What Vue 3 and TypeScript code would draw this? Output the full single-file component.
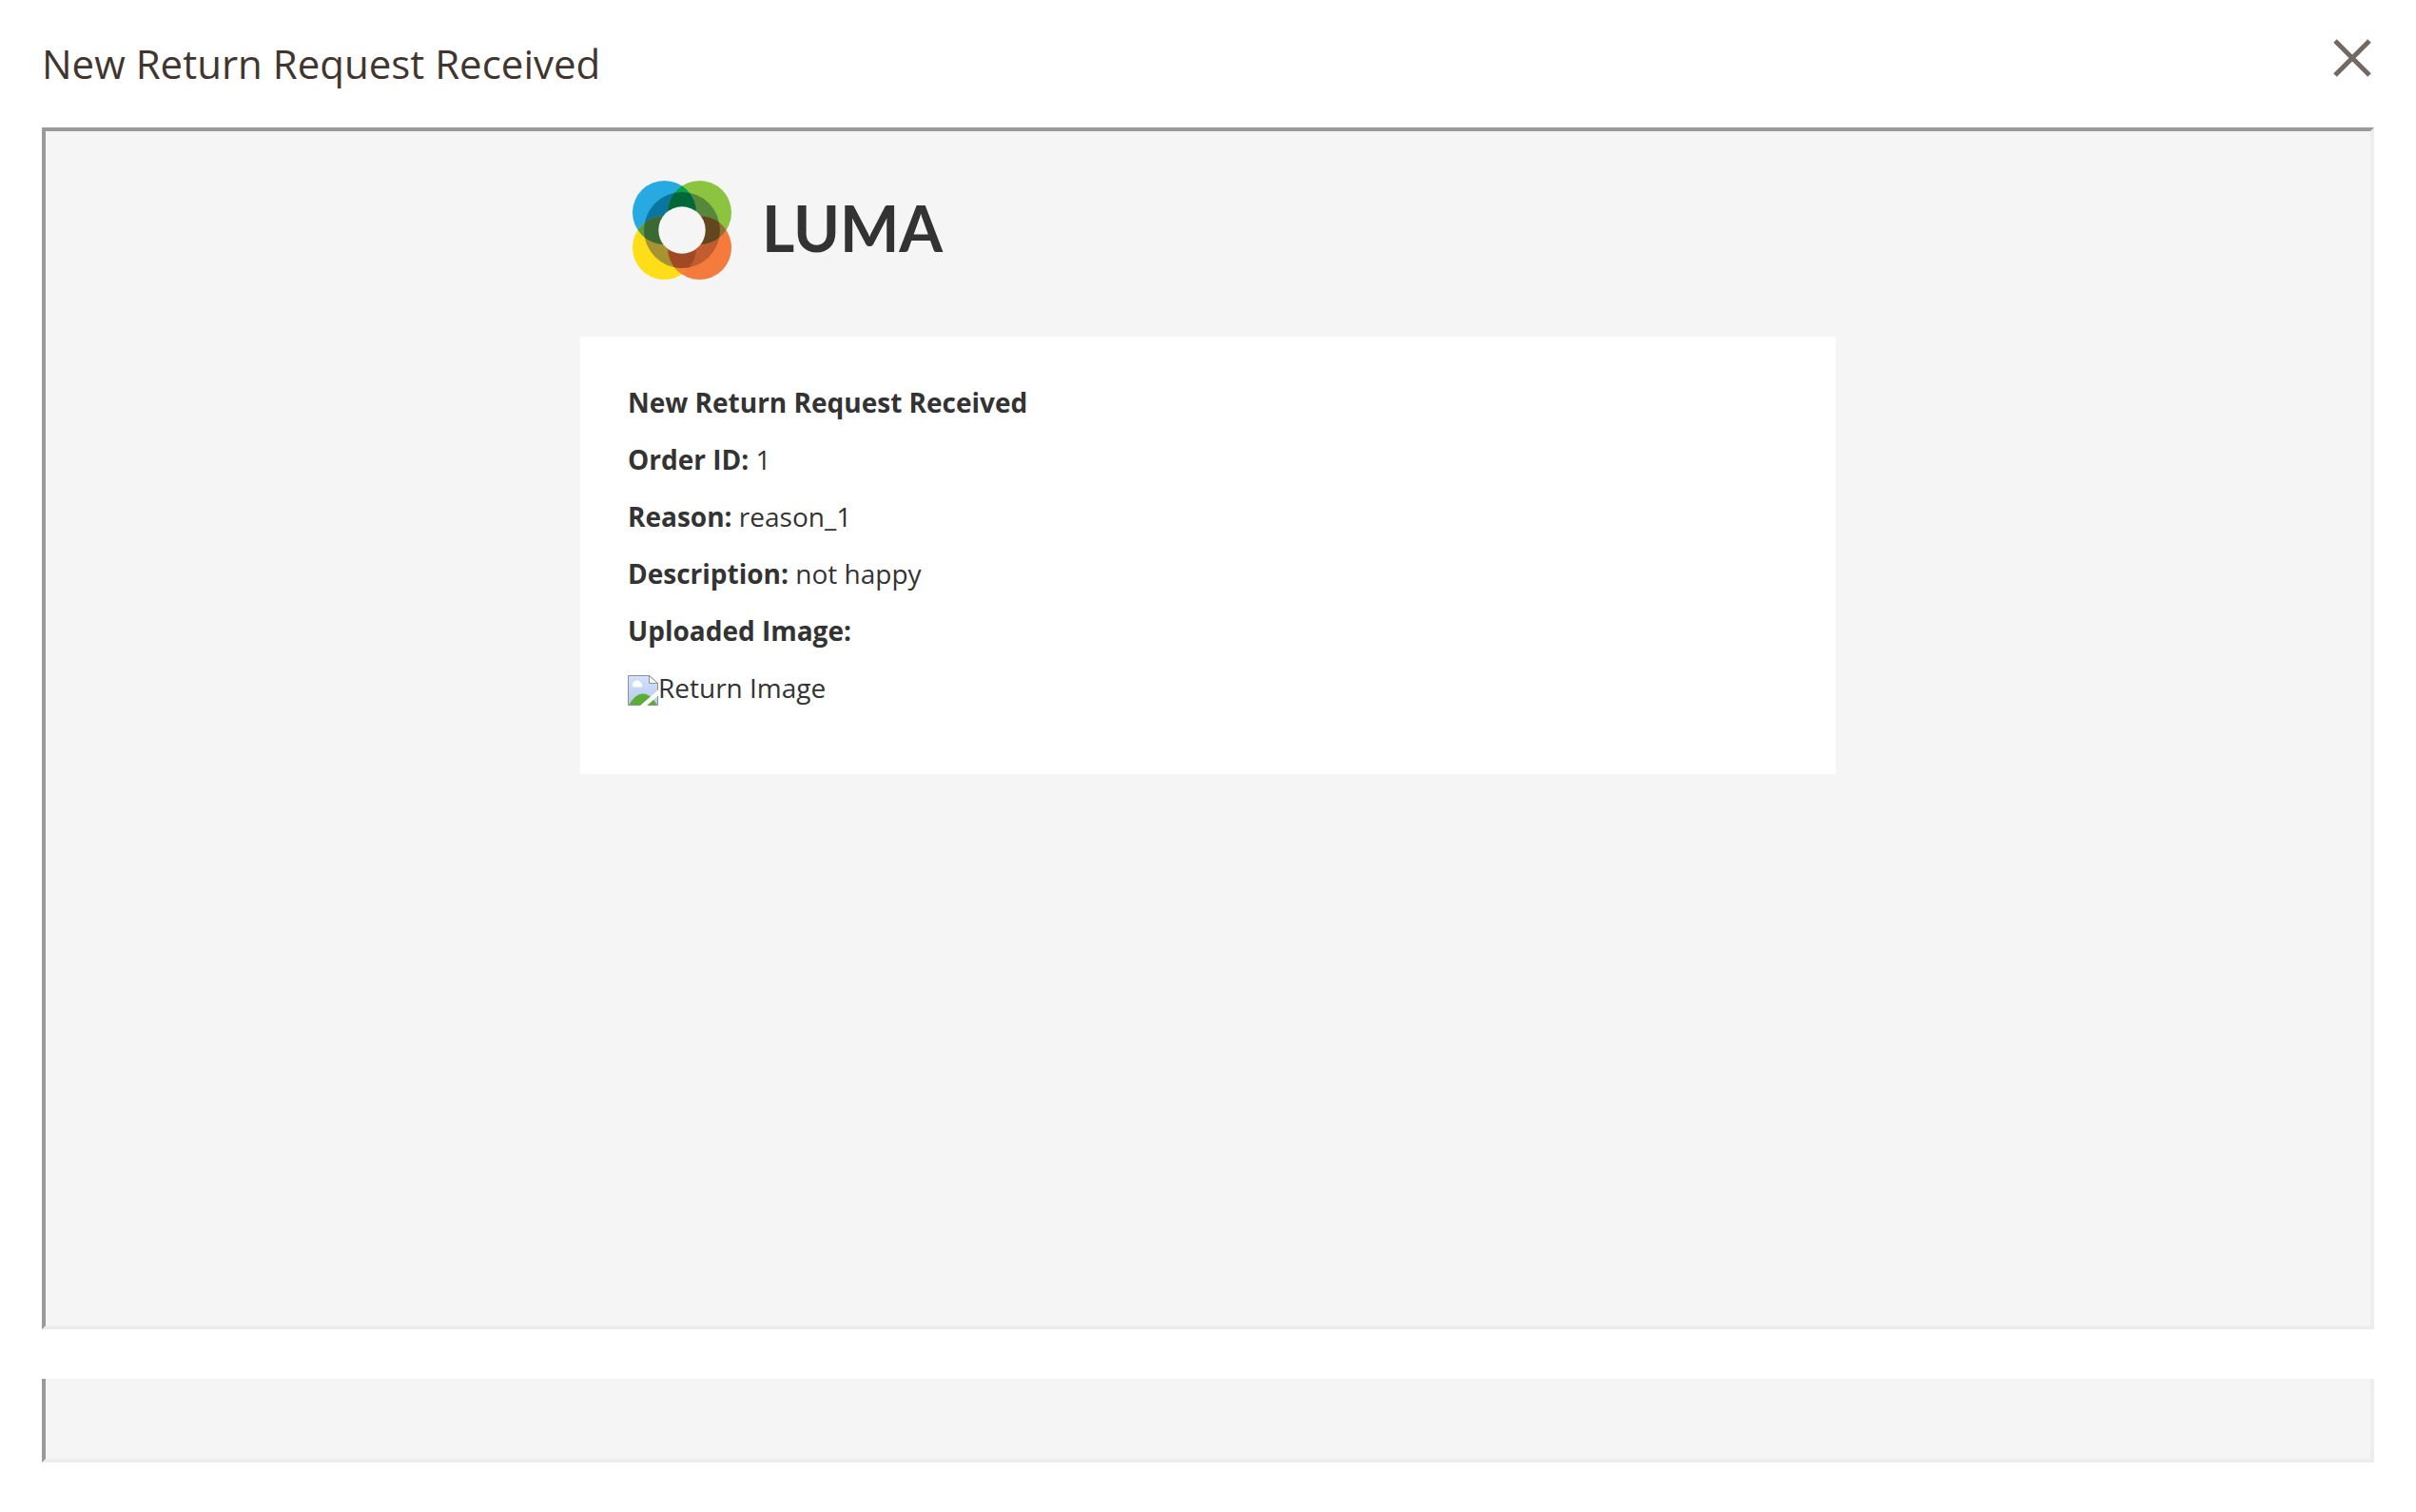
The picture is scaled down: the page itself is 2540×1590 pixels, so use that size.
<script setup lang="ts">
interface Detail {
  label: string
  value: string
}

const title: string = 'New Return Request Received'

const details: Detail[] = [
  { label: 'Order ID:', value: '1' },
  { label: 'Reason:', value: 'reason_1' },
  { label: 'Description:', value: 'not happy' },
  { label: 'Uploaded Image:', value: '' },
]
</script>

<template>
  <main class="modal">
    <header class="modal-header">
      <h1 class="modal-title">{{ title }}</h1>
      <button class="close" type="button" aria-label="Close">
        <svg width="40" height="40" viewBox="0 0 40 40" aria-hidden="true">
          <path d="M2 2 38 38M38 2 2 38" fill="none" stroke="#736963" stroke-width="5" />
        </svg>
      </button>
    </header>

    <section class="frame preview">
      <div class="email">
        <div class="brand">
          <svg class="mark" width="104" height="104" viewBox="0 0 104 104" aria-hidden="true">
            <defs>
              <clipPath id="clip-blue"><circle cx="33.5" cy="33.5" r="33.5" /></clipPath>
              <clipPath id="clip-orange"><circle cx="70.5" cy="70.5" r="33.5" /></clipPath>
              <clipPath id="clip-ring"><circle cx="52" cy="52" r="40" /></clipPath>
            </defs>
            <circle cx="33.5" cy="33.5" r="33.5" fill="#27a9e1" />
            <circle cx="70.5" cy="33.5" r="33.5" fill="#8bc53f" />
            <circle cx="33.5" cy="70.5" r="33.5" fill="#ffde17" />
            <circle cx="70.5" cy="70.5" r="33.5" fill="#f47b3c" />
            <g clip-path="url(#clip-blue)">
              <circle cx="70.5" cy="33.5" r="33.5" fill="#00a14b" />
              <circle cx="33.5" cy="70.5" r="33.5" fill="#5c9a45" />
            </g>
            <g clip-path="url(#clip-orange)">
              <circle cx="70.5" cy="33.5" r="33.5" fill="#966c39" />
              <circle cx="33.5" cy="70.5" r="33.5" fill="#f58233" />
            </g>
            <g clip-path="url(#clip-ring)">
              <circle cx="33.5" cy="33.5" r="33.5" fill="#0b769d" />
              <circle cx="70.5" cy="33.5" r="33.5" fill="#57863d" />
              <circle cx="33.5" cy="70.5" r="33.5" fill="#a79332" />
              <circle cx="70.5" cy="70.5" r="33.5" fill="#c05c2e" />
              <g clip-path="url(#clip-blue)">
                <circle cx="70.5" cy="33.5" r="33.5" fill="#006838" />
                <circle cx="33.5" cy="70.5" r="33.5" fill="#3a6932" />
              </g>
              <g clip-path="url(#clip-orange)">
                <circle cx="70.5" cy="33.5" r="33.5" fill="#62461f" />
                <circle cx="33.5" cy="70.5" r="33.5" fill="#9f4a24" />
              </g>
            </g>
            <circle cx="52" cy="52" r="24.7" fill="#f5f5f5" />
          </svg>
          <span class="wordmark">LUMA</span>
        </div>

        <article class="card">
          <p><strong>{{ title }}</strong></p>
          <p v-for="item in details" :key="item.label">
            <strong>{{ item.label }}</strong> {{ item.value }}
          </p>
          <p class="attachment">
            <svg width="32" height="32" viewBox="0 0 32 32" aria-hidden="true">
              <defs>
                <linearGradient id="sky" x1="0" y1="0" x2="0" y2="1">
                  <stop offset="0" stop-color="#d3e1fb" />
                  <stop offset="1" stop-color="#b6c9ee" />
                </linearGradient>
              </defs>
              <path d="M.5.5H22.5L31.5 8.5V31.5H.5Z" fill="url(#sky)" />
              <path d="M6 12.5a3 3 0 0 1 0-5 4.500 4.500 0 0 1 8 1 2.200 2.200 0 0 1 0 4Z" fill="#fff" />
              <path d="M1 31.500C5 25 10 19.500 16 19.500S27 25 31 31.500Z" fill="#5aae35" />
              <path d="M.5.5H22.5L31.5 8.5V31.5H.5Z" fill="none" stroke="#8d9096" />
              <path d="M22.5.5V8.5H31.5Z" fill="#fff" stroke="#8d9096" />
              <path d="M13 32 32 15.500V21.500L20 32Z" fill="#fff" />
            </svg>
            <span>Return Image</span>
          </p>
        </article>
      </div>
    </section>

    <section class="frame remainder"></section>
  </main>
</template>

<style>
body {
  margin: 0;
  background: #fff;
}
</style>

<style scoped>
.modal {
  box-sizing: border-box;
  min-height: 100vh;
  padding: 36px 44px 52px;
  font-family: "Open Sans", "Noto Sans", sans-serif;
  color: #333;
}

.modal-header {
  display: flex;
  justify-content: space-between;
  align-items: flex-start;
  height: 98px;
}

.modal-title {
  margin: 0;
  font-size: 42px;
  line-height: 62px;
  font-weight: 400;
  color: #41362f;
}

.close {
  display: flex;
  margin: 0;
  padding: 5px 3px;
  border: 0;
  background: none;
  cursor: pointer;
}

.frame {
  box-sizing: border-box;
  border: 4px solid;
  border-color: #9a9a9a #ededed #ededed #9a9a9a;
  background: #f5f5f5;
}

.preview {
  min-height: calc(100vh - 326px);
}

.remainder {
  height: 88px;
  margin-top: 52px;
  border-top: 0;
}

.email {
  max-width: 1320px;
  margin: 0 auto;
}

.brand {
  display: flex;
  align-items: center;
  gap: 32px;
  padding: 52px 55px 60px;
}

.wordmark {
  padding-bottom: 4px;
  font-family: Lato, sans-serif;
  font-size: 66px;
  line-height: 80px;
  font-weight: 700;
}

.card {
  padding: 49px 50px 71px;
  background: #fff;
  font-size: 28px;
  line-height: 40px;
}

.card p {
  margin: 0 0 20px;
}

.card p.attachment {
  display: flex;
  align-items: center;
  margin: 0;
}

.attachment svg {
  margin-top: 6px;
}
</style>
